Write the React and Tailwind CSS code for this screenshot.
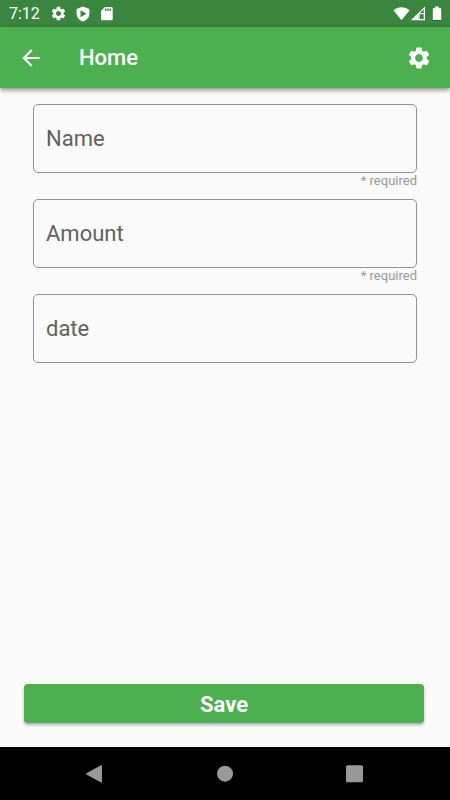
import React, { useState } from "react";
import { MdArrowBack, MdSettings } from "react-icons/md";

const fields = [
  { id: "name", label: "Name", required: true },
  { id: "amount", label: "Amount", required: true },
  { id: "date", label: "date", required: false },
];

const StatusBar = () => (
  <div className="flex h-[27px] items-center bg-[#3b863e] pl-[9px] pr-2 text-white">
    <span className="w-[41px] pt-px text-base leading-5">7:12</span>
    <div className="flex items-center gap-2">
      <MdSettings className="size-[17px]" />
      <svg className="size-4" viewBox="0 0 16 16" fill="currentColor">
        <path
          fillRule="evenodd"
          d="M8 .4 14.4 2.9V7.6C14.4 11.5 11.8 14.5 8 15.5 4.2 14.5 1.6 11.5 1.6 7.6V2.9ZM5.5 4.3V11.3L11.5 7.8Z"
        />
      </svg>
      <svg className="size-4" viewBox="0 0 16 16" fill="currentColor">
        <path
          fillRule="evenodd"
          d="M6 1H12.4Q13.7 1 13.7 2.3V13Q13.7 14.3 12.4 14.3H3.3Q2 14.3 2 13V5ZM6.1 2.4V5H7.5V2.4ZM8.3 2.4V5H9.7V2.4ZM10.5 2.4V5H11.9V2.4Z"
        />
      </svg>
    </div>
    <div className="ml-auto flex items-center">
      <svg className="h-4 w-[17px]" viewBox="0 0 17 16" fill="currentColor">
        <path d="M8.5 14.3.4 4.2C5 .1 12 .1 16.6 4.2Z" />
      </svg>
      <svg className="h-4 w-[17px]" viewBox="0 0 17 16" fill="currentColor">
        <path
          fillRule="evenodd"
          d="M.8 14.3 15 .5V14.3ZM8.4 8.4V13H13.7V3.3Z"
        />
        <path d="M8.4 7.2 9.7 6V14.3H8.4Z" />
        <path d="M8.4 7H13.7V8.2H8.4Z" />
      </svg>
      <svg className="ml-[5px] h-4 w-[10px]" viewBox="0 0 10 16">
        <path
          fill="#fff"
          d="M3.2.6H6.8V2H8.2Q9.2 2 9.2 3V14H.8V3Q.8 2 1.8 2H3.2Z"
        />
        <path fill="#0d800d" d="M.8 14H9.2V15H.8Z" />
      </svg>
    </div>
  </div>
);

const Header = () => (
  <header className="flex h-[61px] items-center bg-[#4caf50] pr-[18px] pl-[18px] text-white shadow-[0_2px_5px_rgba(0,0,0,0.45)]">
    <button type="button" aria-label="Back">
      <MdArrowBack className="size-[26px]" />
    </button>
    <h1 className="ml-[35px] text-[22px] leading-7 font-medium">Home</h1>
    <button type="button" aria-label="Settings" className="ml-auto">
      <MdSettings className="size-[26px]" />
    </button>
  </header>
);

const Field = ({ id, label, required, value, onChange }) => (
  <div className="h-[95px]">
    <input
      id={id}
      name={id}
      type="text"
      aria-label={label}
      placeholder={label}
      required={required}
      value={value}
      onChange={(e) => onChange(id, e.target.value)}
      className="block h-[69px] w-full rounded-[5px] border border-[#929292] bg-transparent px-3 pb-px text-[22px] text-gray-800 outline-none placeholder:text-[#616161] focus:border-[#4caf50]"
    />
    {required && (
      <p className="text-right text-[13px] leading-4 text-[#999999]">* required</p>
    )}
  </div>
);

const NavBar = () => (
  <nav className="flex h-[53px] items-center justify-center gap-[106px] bg-black text-[#999999]">
    <button type="button" aria-label="Navigate back">
      <svg className="size-6" viewBox="0 0 24 24" fill="currentColor">
        <path d="M3.4 11.3 18 3.3Q19 2.9 19 3.9V19.8Q19 20.8 18 20.4L3.4 12.4Q2.6 11.9 3.4 11.3Z" />
      </svg>
    </button>
    <button type="button" aria-label="Home screen">
      <svg className="size-6" viewBox="0 0 24 24" fill="currentColor">
        <circle cx="12" cy="11.7" r="8" />
      </svg>
    </button>
    <button type="button" aria-label="Recent apps">
      <svg className="size-6" viewBox="0 0 24 24" fill="currentColor">
        <rect x="3" y="3.2" width="17" height="17" rx="1.5" />
      </svg>
    </button>
  </nav>
);

export default function App() {
  const [values, setValues] = useState({ name: "", amount: "", date: "" });

  const handleChange = (id, value) => {
    setValues({ ...values, [id]: value });
  };

  const handleSubmit = (e) => {
    e.preventDefault();
  };

  return (
    <div className="flex min-h-screen flex-col bg-[#fafafa] font-['Roboto',sans-serif]">
      <StatusBar />
      <Header />
      <form
        onSubmit={handleSubmit}
        className="flex flex-1 flex-col pt-4 pr-[26px] pb-6 pl-6"
      >
        <div className="pr-[7px] pl-[9px]">
          {fields.map((field) => (
            <Field
              key={field.id}
              {...field}
              value={values[field.id]}
              onChange={handleChange}
            />
          ))}
        </div>
        <button
          type="submit"
          className="mt-auto h-[39px] w-full rounded bg-[#4caf50] pt-0.5 text-[22px] leading-7 font-bold text-white shadow-[0_2px_3px_rgba(0,0,0,0.3)]"
        >
          Save
        </button>
      </form>
      <NavBar />
    </div>
  );
}
